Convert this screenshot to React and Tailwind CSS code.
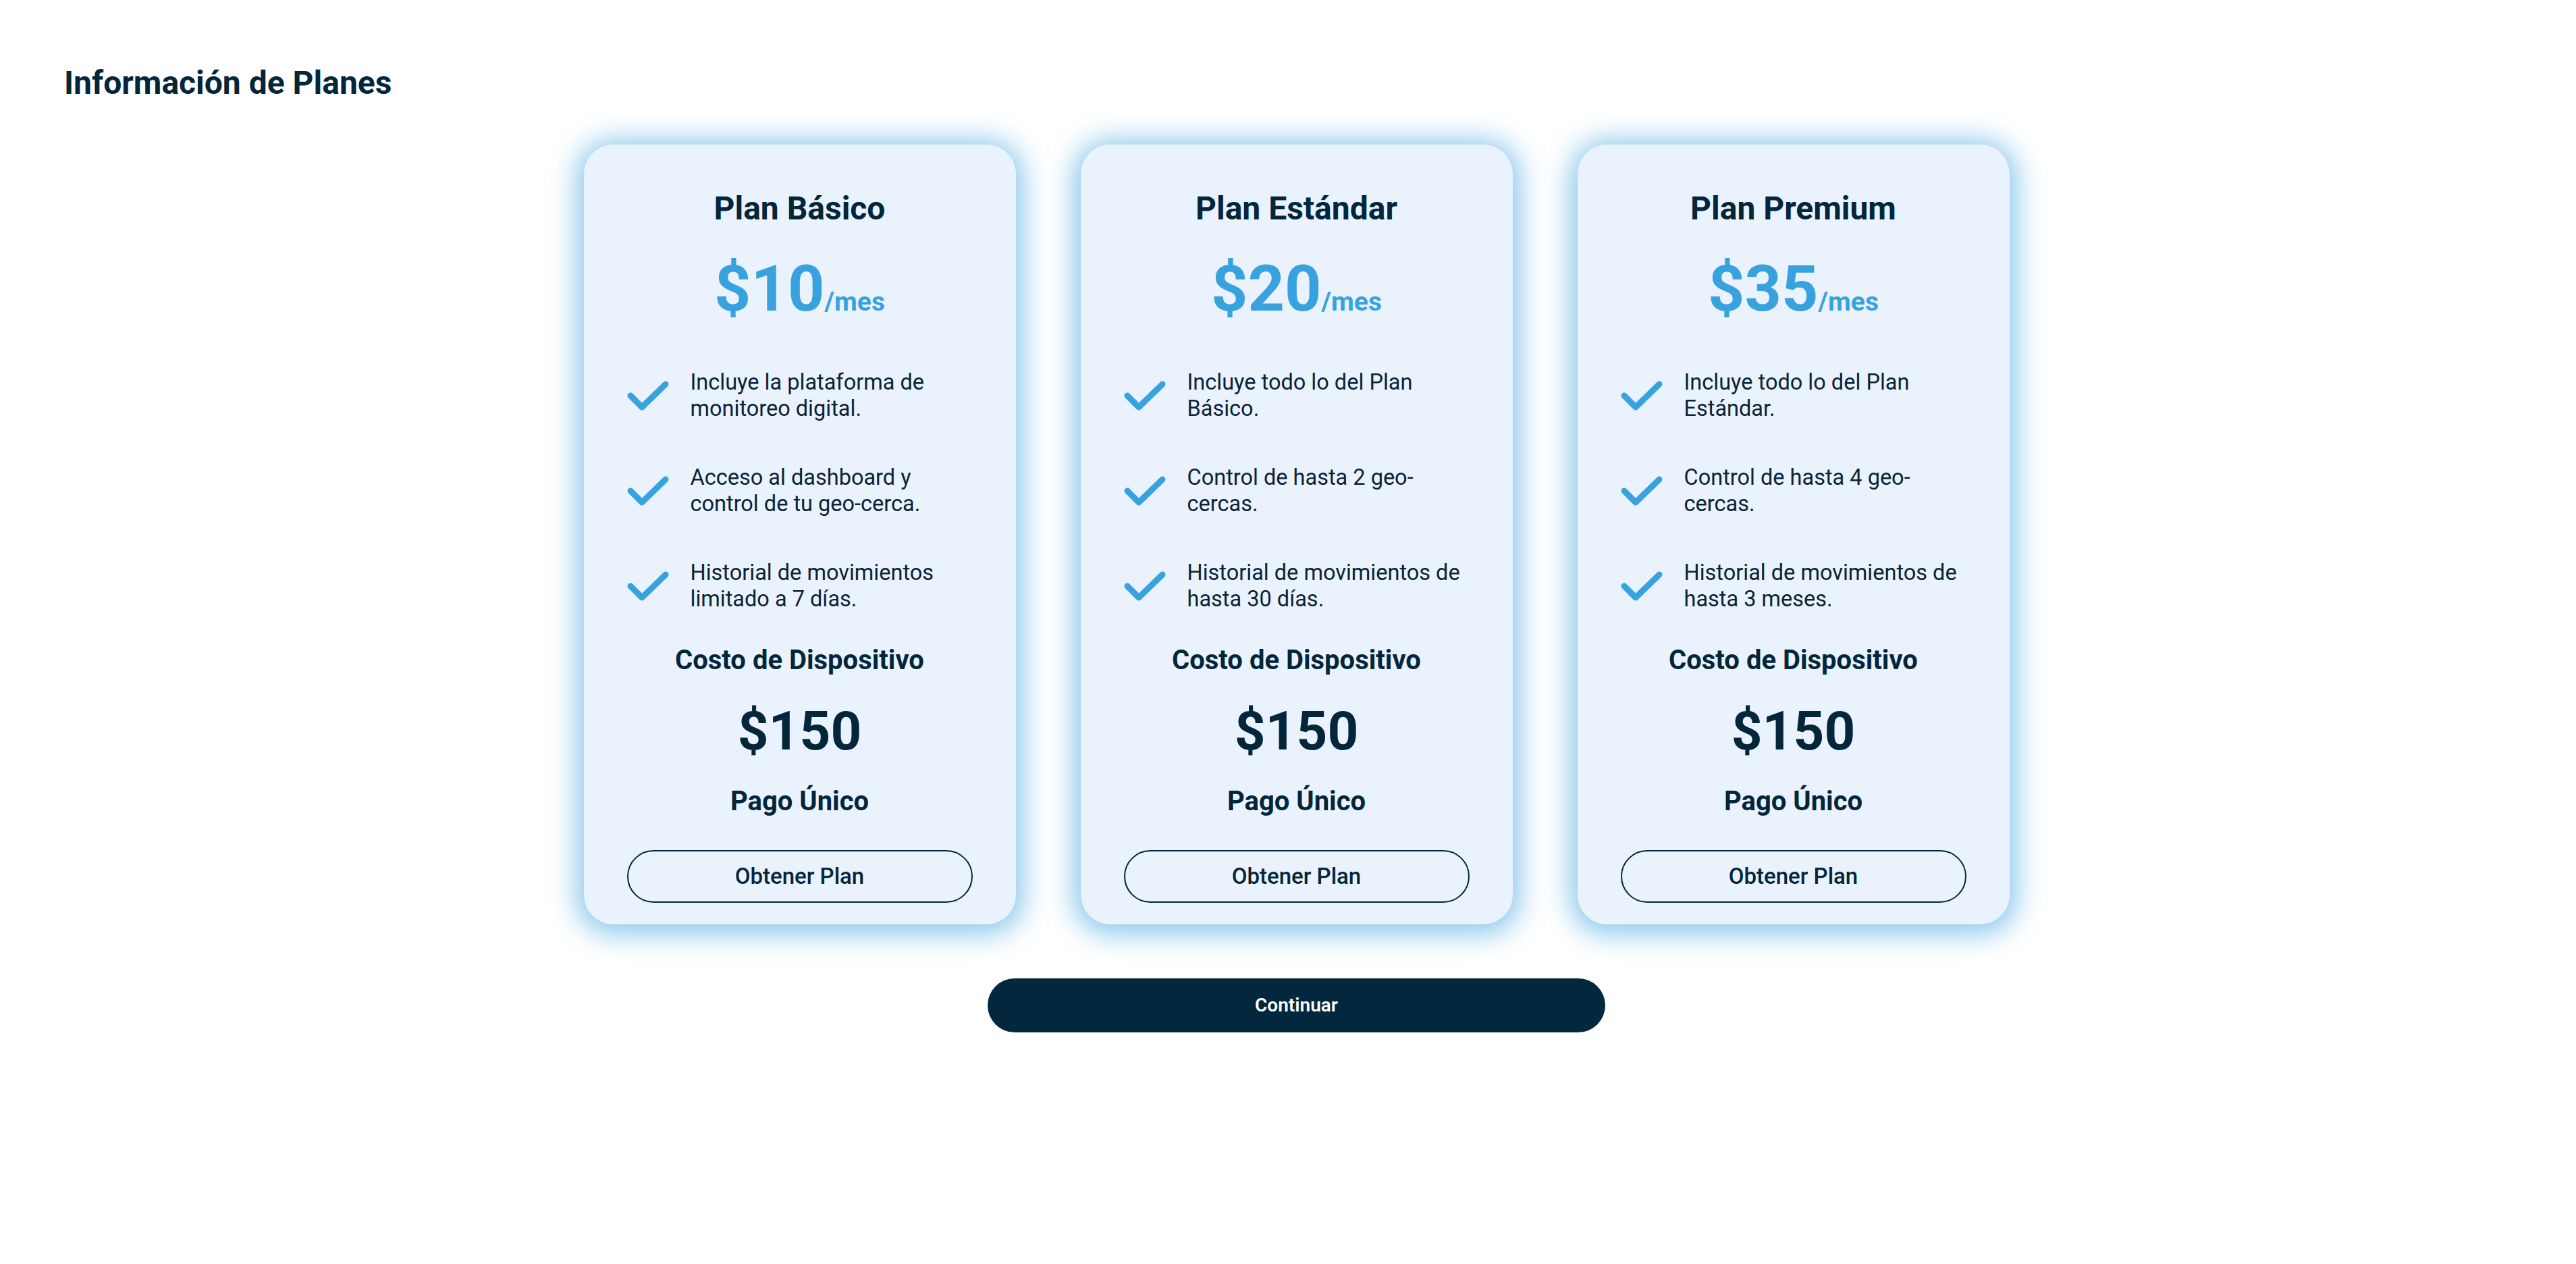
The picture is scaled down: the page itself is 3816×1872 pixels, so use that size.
import React from "react";

const plans = [
  {
    name: "Plan Básico",
    price: "$10",
    features: [
      "Incluye la plataforma de monitoreo digital.",
      "Acceso al dashboard y control de tu geo-cerca.",
      "Historial de movimientos limitado a 7 días.",
    ],
  },
  {
    name: "Plan Estándar",
    price: "$20",
    features: [
      "Incluye todo lo del Plan Básico.",
      "Control de hasta 2 geo-cercas.",
      "Historial de movimientos de hasta 30 días.",
    ],
  },
  {
    name: "Plan Premium",
    price: "$35",
    features: [
      "Incluye todo lo del Plan Estándar.",
      "Control de hasta 4 geo-cercas.",
      "Historial de movimientos de hasta 3 meses.",
    ],
  },
];

const CheckIcon = () => (
  <svg width="62" height="44" viewBox="0 0 62 44" fill="none" className="shrink-0">
    <path
      d="M5 22 L22 39 L57 5"
      stroke="#38a2df"
      strokeWidth="9"
      strokeLinecap="round"
      strokeLinejoin="round"
    />
  </svg>
);

const PlanCard = ({ plan }) => (
  <div className="w-[640px] flex flex-col items-center bg-[#eaf2fd] rounded-[44px] px-16 pt-[66px] pb-[32px] shadow-[0_4px_40px_10px_rgba(56,162,223,0.6)]">
    <h3 className="text-[48px] leading-[58px] font-bold text-[#03263b]">{plan.name}</h3>

    {/* Price */}
    <div className="mt-[42px] flex items-baseline text-[#38a2df] font-bold">
      <span className="text-[95px] leading-[95px]">{plan.price}</span>
      <span className="text-[39px] leading-[39px]">/mes</span>
    </div>

    {/* Features */}
    <ul className="mt-[72px] w-full flex flex-col gap-[63px]">
      {plan.features.map((f) => (
        <li key={f} className="flex items-center gap-[32px]">
          <CheckIcon />
          <span className="text-[32.5px] leading-[39px] text-[#0a2436]">{f}</span>
        </li>
      ))}
    </ul>

    <p className="mt-[47px] text-[40px] leading-[48px] font-bold text-[#03263b]">Costo de Dispositivo</p>
    <p className="mt-[41px] text-[80px] leading-[80px] font-bold text-[#03263b]">$150</p>
    <p className="mt-[40px] text-[40px] leading-[48px] font-bold text-[#03263b]">Pago Único</p>

    <button className="mt-[48px] w-full h-[78px] rounded-full border-2 border-[#03263b] text-[33px] text-[#03263b] font-medium">
      Obtener Plan
    </button>
  </div>
);

export default function App() {
  return (
    <div className="min-h-screen bg-white pl-[95px] pr-[70px] pt-[94px] font-['Roboto',sans-serif]">
      <h1 className="text-[48px] leading-[58px] font-bold text-[#03263b]">Información de Planes</h1>

      <div className="mt-[62px] flex justify-center gap-[96px]">
        {plans.map((p) => (
          <PlanCard key={p.name} plan={p} />
        ))}
      </div>

      <div className="mt-[80px] flex justify-center">
        <button className="w-[915px] h-[80px] rounded-full bg-[#03283e] text-white text-[28px] font-semibold">
          Continuar
        </button>
      </div>
    </div>
  );
}
